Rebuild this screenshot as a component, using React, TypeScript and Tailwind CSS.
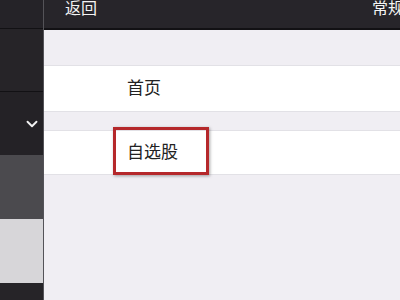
import { ChevronDown } from 'lucide-react';

const font = { fontFamily: '"Noto Sans CJK SC", "Liberation Sans", sans-serif' };

export default function App() {
  return (
    <div className="flex h-[300px] w-[400px] overflow-hidden bg-[#f0eef3]" style={font}>
      <aside className="flex w-[44px] shrink-0 flex-col border-r border-[#545358]">
        <div className="h-[29px] border-b border-[#121114] bg-[#252328]" />
        <div className="h-[63px] border-b border-[#121114] bg-[#262428]" />
        <div className="flex h-[63px] items-center justify-end bg-[#242226] pr-[2px]">
          <ChevronDown className="size-[18px] text-[#f2f2f2]" strokeWidth={2.5} />
        </div>
        <div className="h-[64px] bg-[#4b4a4e]" />
        <div className="h-[64px] bg-[#d7d6d9]" />
        <div className="flex-1 bg-[#262428]" />
      </aside>
      <main className="flex flex-1 flex-col">
        <header className="flex h-[30px] items-start justify-between border-b-2 border-[#121114] bg-[#27252a] pl-[21px] text-[16px] leading-none text-[#f4f4f4]">
          <span className="-mt-[1px]">返回</span>
          <span className="-mr-[4px] -mt-[1px]">常规</span>
        </header>
        <div className="h-[36px] border-b border-[#e2e1e6]" />
        <div className="flex h-[45px] items-center bg-white pb-[4px] pl-[83px] text-[17px] leading-none text-[#222]">首页</div>
        <div className="h-[20px] border-y border-[#e2e1e6]" />
        <div className="relative flex h-[44px] items-center border-b border-[#e2e1e6] bg-white pb-[4px] pl-[83px] text-[17px] leading-none text-[#222]">
          自选股
          <div className="absolute left-[69px] top-[-4px] h-[48px] w-[96px] border-[3px] border-[#b5282b] shadow-[1px_1px_3px_rgba(0,0,0,0.35)]" />
        </div>
      </main>
    </div>
  );
}
